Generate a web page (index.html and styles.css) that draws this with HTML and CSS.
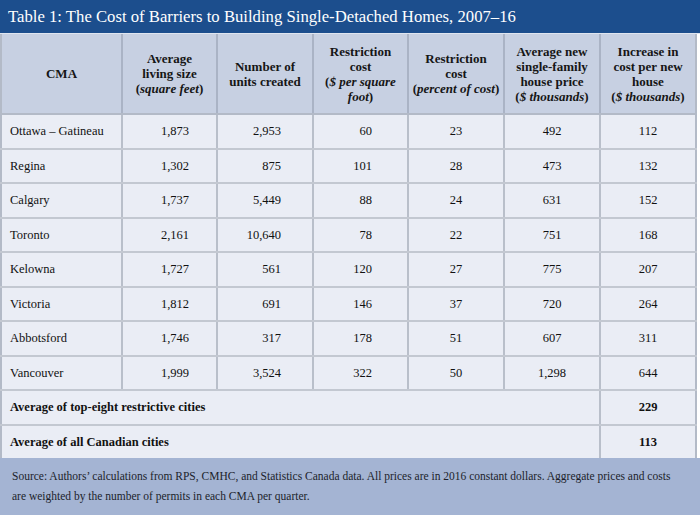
FILE: index.html
```html
<!DOCTYPE html>
<html>
<head>
<meta charset="utf-8">
<link rel="stylesheet" href="styles.css">
</head>
<body>
<div class="frame">
  <div class="title">Table 1: The Cost of Barriers to Building Single-Detached Homes, 2007–16</div>
  <table class="data">
    <colgroup>
      <col class="c1"><col class="c2"><col class="c3"><col class="c4"><col class="c5"><col class="c6"><col class="c7">
    </colgroup>
    <thead>
      <tr>
        <th>CMA</th>
        <th>Average<br>living size<br>(<i>square feet</i>)</th>
        <th>Number of<br>units created</th>
        <th>Restriction<br>cost<br>(<i>$ per square<br>foot</i>)</th>
        <th>Restriction<br>cost<br>(<i>percent of cost</i>)</th>
        <th>Average new<br>single-family<br>house price<br>(<i>$ thousands</i>)</th>
        <th>Increase in<br>cost per new<br>house<br>(<i>$ thousands</i>)</th>
      </tr>
    </thead>
    <tbody>
      <tr><td class="name">Ottawa – Gatineau</td><td class="n2">1,873</td><td class="n3">2,953</td><td class="n4">60</td><td class="mid">23</td><td class="mid">492</td><td class="mid">112</td></tr>
      <tr><td class="name">Regina</td><td class="n2">1,302</td><td class="n3">875</td><td class="n4">101</td><td class="mid">28</td><td class="mid">473</td><td class="mid">132</td></tr>
      <tr><td class="name">Calgary</td><td class="n2">1,737</td><td class="n3">5,449</td><td class="n4">88</td><td class="mid">24</td><td class="mid">631</td><td class="mid">152</td></tr>
      <tr><td class="name">Toronto</td><td class="n2">2,161</td><td class="n3">10,640</td><td class="n4">78</td><td class="mid">22</td><td class="mid">751</td><td class="mid">168</td></tr>
      <tr><td class="name">Kelowna</td><td class="n2">1,727</td><td class="n3">561</td><td class="n4">120</td><td class="mid">27</td><td class="mid">775</td><td class="mid">207</td></tr>
      <tr><td class="name">Victoria</td><td class="n2">1,812</td><td class="n3">691</td><td class="n4">146</td><td class="mid">37</td><td class="mid">720</td><td class="mid">264</td></tr>
      <tr><td class="name">Abbotsford</td><td class="n2">1,746</td><td class="n3">317</td><td class="n4">178</td><td class="mid">51</td><td class="mid">607</td><td class="mid">311</td></tr>
      <tr><td class="name">Vancouver</td><td class="n2">1,999</td><td class="n3">3,524</td><td class="n4">322</td><td class="mid">50</td><td class="mid">1,298</td><td class="mid">644</td></tr>
      <tr class="avg"><td class="name" colspan="6">Average of top-eight restrictive cities</td><td class="mid">229</td></tr>
      <tr class="avg"><td class="name" colspan="6">Average of all Canadian cities</td><td class="mid">113</td></tr>
    </tbody>
  </table>
  <div class="source">Source: Authors’ calculations from RPS, CMHC, and Statistics Canada data. All prices are in 2016 constant dollars. Aggregate prices and costs<br>are weighted by the number of permits in each CMA per quarter.</div>
</div>
</body>
</html>
```

FILE: styles.css
```css
html, body {
  margin: 0;
  padding: 0;
  background: #ffffff;
}
.frame {
  width: 700px;
  height: 516px;
  overflow: hidden;
  font-family: "Liberation Serif", "Times New Roman", serif;
  color: #111111;
}
.title {
  height: 34px;
  box-sizing: border-box;
  background: #1c4e8d;
  color: #ffffff;
  font-size: 16.7px;
  line-height: 34px;
  padding-left: 8px;
  border-bottom: 1px solid #dfe5ef;
}
.data {
  width: 697px;
  border-collapse: collapse;
  table-layout: fixed;
  border-left: 2px solid #b3bac7;
  border-right: 2px solid #b3bac7;
}
.c1 { width: 121px; }
.c2 { width: 95px; }
.c3 { width: 96px; }
.c4 { width: 95px; }
.c5 { width: 96px; }
.c6 { width: 96px; }
.c7 { width: 96px; }
.data th {
  background: #c7d0e2;
  height: 79px;
  padding: 0 2px;
  font-size: 13px;
  line-height: 15px;
  font-weight: bold;
  text-align: center;
  vertical-align: middle;
  border-left: 2px solid #aab3c5;
  border-bottom: 2px solid #b3bac7;
  color: #161616;
}
.data th:first-child { border-left: none; }
.data th i { font-weight: bold; }
.data td {
  background: #eaedf5;
  height: 32px;
  padding: 0;
  font-size: 12.5px;
  border-left: 2px solid #b9bfca;
  border-bottom: 2px solid #c3c8d1;
  vertical-align: middle;
}
.data tbody tr:nth-child(odd) td { height: 33px; }
.data td:first-child { border-left: none; }
.data td.name { padding-left: 8px; }
.data td.n2 { text-align: right; padding-right: 27px; }
.data td.n3 { text-align: right; padding-right: 31px; }
.data td.n4 { text-align: right; padding-right: 35px; }
.data td.mid { text-align: center; }
.data tr.avg td { font-weight: bold; }
.data tr:last-child td { border-bottom: none; }
.source {
  background: #a4b4d3;
  height: 57px;
  box-sizing: border-box;
  padding: 8px 8px 0 12px;
  font-size: 11.5px;
  line-height: 20px;
  color: #1c1f2b;
  white-space: nowrap;
}
```
